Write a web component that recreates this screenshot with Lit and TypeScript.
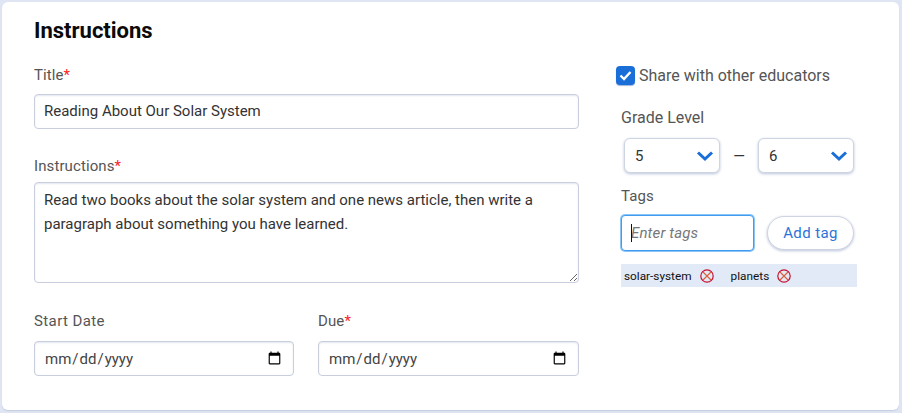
import { LitElement, html, css } from "lit";
import { customElement } from "lit/decorators.js";

@customElement("app-root")
export class AppRoot extends LitElement {
  static styles = css`
    :host { display: block; width: 902px; height: 413px; box-sizing: border-box; padding: 2px 3px 3px 2px; background: #dfe5f2; font-family: Roboto, sans-serif; color: #555; overflow: hidden; }
    * { box-sizing: border-box; }
    .card { height: 408px; background: #fff; border-radius: 6px; padding: 16px 0 0 32px; display: flex; box-shadow: 0 1px 1px #c5cde0; }
    .main { width: 545px; display: flex; flex-direction: column; }
    h1 { margin: 0; font-size: 22px; line-height: 26px; font-weight: 700; color: #0a0a0a; }
    label, .lab { display: block; font-size: 15px; line-height: 18px; color: #555; letter-spacing: 0.1px; }
    .req { color: #f22; }
    .title-lab { margin-top: 22px; }
    .field { display: block; width: 100%; font-family: Roboto, sans-serif; font-size: 15px; color: #333; background: #fff; border: 1px solid #c8cede; border-radius: 4px; outline: none; padding: 0 9px; box-shadow: inset 0 1px 2px #e4e7f0; }
    .title-in { height: 35px; margin-top: 10px; padding-bottom: 1px; }
    .inst-lab { margin-top: 28px; }
    textarea.field { height: 101px; margin-top: 7px; padding: 5px 9px; line-height: 24px; resize: vertical; }
    .dates { display: flex; gap: 24px; margin-top: 29px; }
    .date-a { width: 260px; }
    .date-b { width: 261px; }
    .start { letter-spacing: 0.4px; }
    input[type="date"].field { height: 35px; margin-top: 11px; padding: 0 9px; color: #444; }
    .side { width: 241px; margin-left: 37px; padding-top: 47px; }
    .share { display: flex; align-items: center; gap: 4px; height: 20px; font-size: 16px; }
    .check { width: 19px; height: 19px; border-radius: 4px; background: #1a6ed8; display: flex; align-items: center; justify-content: center; box-shadow: 0 1px 1px #9db4d8; }
    .inner { padding-left: 5px; }
    .grade-lab { margin-top: 24px; font-size: 16px; letter-spacing: 0; }
    .grades { display: flex; align-items: center; margin-top: 11px; padding-left: 3px; }
    .select { width: 96px; height: 35px; display: flex; align-items: center; justify-content: space-between; padding: 0 5px 0 10px; border: 1px solid #cfd4e2; border-radius: 6px; background: #fff; box-shadow: 0 1px 3px #b9c3da; font-size: 15px; color: #333; }
    .dash { width: 38px; text-align: center; font-size: 15px; color: #333; }
    .tags-lab { margin-top: 14px; }
    .tag-row { display: flex; align-items: center; margin-top: 10px; }
    .tag-in { width: 133px; height: 36px; border: 1px solid #3f9cf0; border-radius: 4px; background: #fff; box-shadow: 0 0 0 1px #8cc4f6; display: flex; align-items: center; padding-left: 9px; font-size: 15px; letter-spacing: 0.15px; font-style: italic; color: #777; position: relative; }
    .caret { position: absolute; left: 9px; top: 8px; width: 1px; height: 18px; background: #111; }
    .add { margin-left: 13px; width: 87px; height: 34px; border: 1px solid #cfd4e2; border-radius: 17px; background: #fff; color: #2b74d8; font-family: Roboto, sans-serif; font-size: 15px; box-shadow: 0 1px 3px #b9c3da; padding: 0; letter-spacing: 0.4px; }
    .strip { width: 236px; height: 23px; margin-top: 13px; background: #e2eaf8; display: flex; align-items: center; padding-left: 3px; font-size: 11.8px; color: #111; }
    .strip svg { margin-left: 8px; margin-right: 17px; }
  `;

  render() {
    const chev = html`<svg width="18" height="12" viewBox="0 0 18 12"><path d="M2 2.5 L9 9 L16 2.5" fill="none" stroke="#1a6ed8" stroke-width="3"/></svg>`;
    const x = html`<svg width="14" height="14" viewBox="0 0 14 14"><circle cx="7" cy="7" r="6.2" fill="none" stroke="#c8102e" stroke-width="1.2"/><path d="M3 3 L11 11 M11 3 L3 11" stroke="#d8603a" stroke-width="1.1"/></svg>`;
    return html`<div class="card">
      <div class="main">
        <h1>Instructions</h1>
        <label class="title-lab">Title<span class="req">*</span></label>
        <input class="field title-in" .value=${"Reading About Our Solar System"} />
        <label class="inst-lab">Instructions<span class="req">*</span></label>
        <textarea class="field" .value=${"Read two books about the solar system and one news article, then write a paragraph about something you have learned."}></textarea>
        <div class="dates">
          <div class="date-a"><label class="start">Start Date</label><input class="field" type="date" /></div>
          <div class="date-b"><label>Due<span class="req">*</span></label><input class="field" type="date" /></div>
        </div>
      </div>
      <div class="side">
        <div class="share"><span class="check"><svg width="13" height="11" viewBox="0 0 13 11"><path d="M1.5 5.5 L5 9 L11.5 2" fill="none" stroke="#fff" stroke-width="2.4"/></svg></span>Share with other educators</div>
        <div class="inner">
          <div class="lab grade-lab">Grade Level</div>
          <div class="grades">
            <div class="select">5 ${chev}</div><span class="dash">—</span><div class="select">6 ${chev}</div>
          </div>
          <div class="lab tags-lab">Tags</div>
          <div class="tag-row"><div class="tag-in"><span class="caret"></span>Enter tags</div><button class="add">Add tag</button></div>
          <div class="strip">solar-system ${x} planets ${x}</div>
        </div>
      </div>
    </div>`;
  }
}
